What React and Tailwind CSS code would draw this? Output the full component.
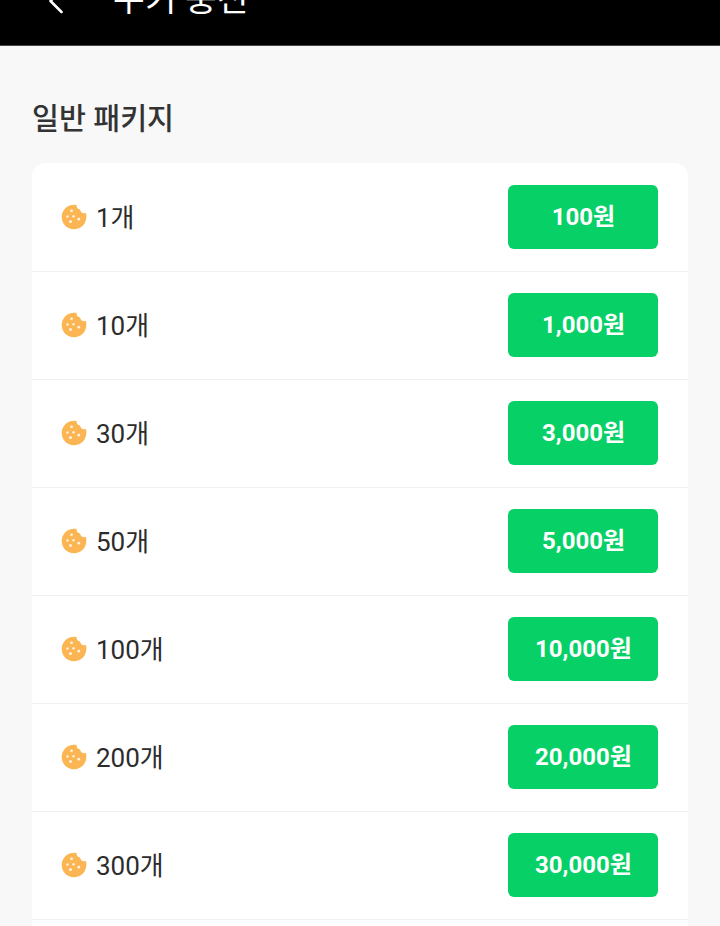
import { ChevronLeft } from 'lucide-react';

const packages = [
    { count: '1개', price: '100원' },
    { count: '10개', price: '1,000원' },
    { count: '30개', price: '3,000원' },
    { count: '50개', price: '5,000원' },
    { count: '100개', price: '10,000원' },
    { count: '200개', price: '20,000원' },
    { count: '300개', price: '30,000원' },
    { count: '500개', price: '50,000원' },
];

function CookieIcon() {
    return (
        <svg width="26" height="26" viewBox="0 0 26 26" className="shrink-0">
            <path
                d="M13 .7c.9 0 1.800.1 2.600.3-.3 2.400 1.200 4.300 3.500 4.500.2 2.200 2 3.800 4.200 3.700.6-.1 1.300-.1 1.800-.3.200 1.100.2 2.700.2 4.100 0 6.800-5.500 12.300-12.300 12.300S.7 19.800.7 13 6.200.7 13 .7z"
                fill="#fbb553"
            />
            <circle cx="10.500" cy="6.800" r="1.400" fill="#fff3e0" />
            <circle cx="6.500" cy="12.500" r="1.200" fill="#fff3e0" />
            <circle cx="12.500" cy="12.200" r="1.200" fill="#fff3e0" />
            <circle cx="9.500" cy="17.500" r="1.500" fill="#fff3e0" />
            <circle cx="17.800" cy="15.200" r="1.400" fill="#fff3e0" />
        </svg>
    );
}

export default function App() {
    return (
        <div className="h-[926px] overflow-hidden bg-[#f8f8f8] font-['Roboto','Noto_Sans_CJK_KR',sans-serif]">
            <header className="flex h-[46px] items-end overflow-hidden border-b border-[#444] bg-black pb-[26px] pl-[34px] text-white">
                <ChevronLeft size={44} strokeWidth={1.400} className="-mb-[4px] shrink-0" />
                <h1 className="ml-[35px] text-[34.500px] leading-[40px]">쿠키 충전</h1>
            </header>

            <main className="px-[32px]">
                <h2 className="mt-[53px] mb-[24px] text-[29.300px] leading-[40px] font-medium text-[#333]">일반 패키지</h2>
                <ul className="rounded-t-[14px] bg-white pt-px">
                    {packages.map((item) => (
                        <li
                            key={item.count}
                            className="flex h-[108px] items-center justify-between border-b border-[#f0f0f0] pr-[30px] pb-[2px] pl-[29px]"
                        >
                            <div className="flex items-center gap-[9px] text-[26px] text-[#2c2c2c]">
                                <CookieIcon />
                                <span className="mt-[3px]">{item.count}</span>
                            </div>
                            <button className="h-[64px] w-[150px] rounded-[6px] bg-[#06d066] pl-[1px] text-[24px] font-bold text-white">
                                {item.price}
                            </button>
                        </li>
                    ))}
                </ul>
            </main>
        </div>
    );
}
